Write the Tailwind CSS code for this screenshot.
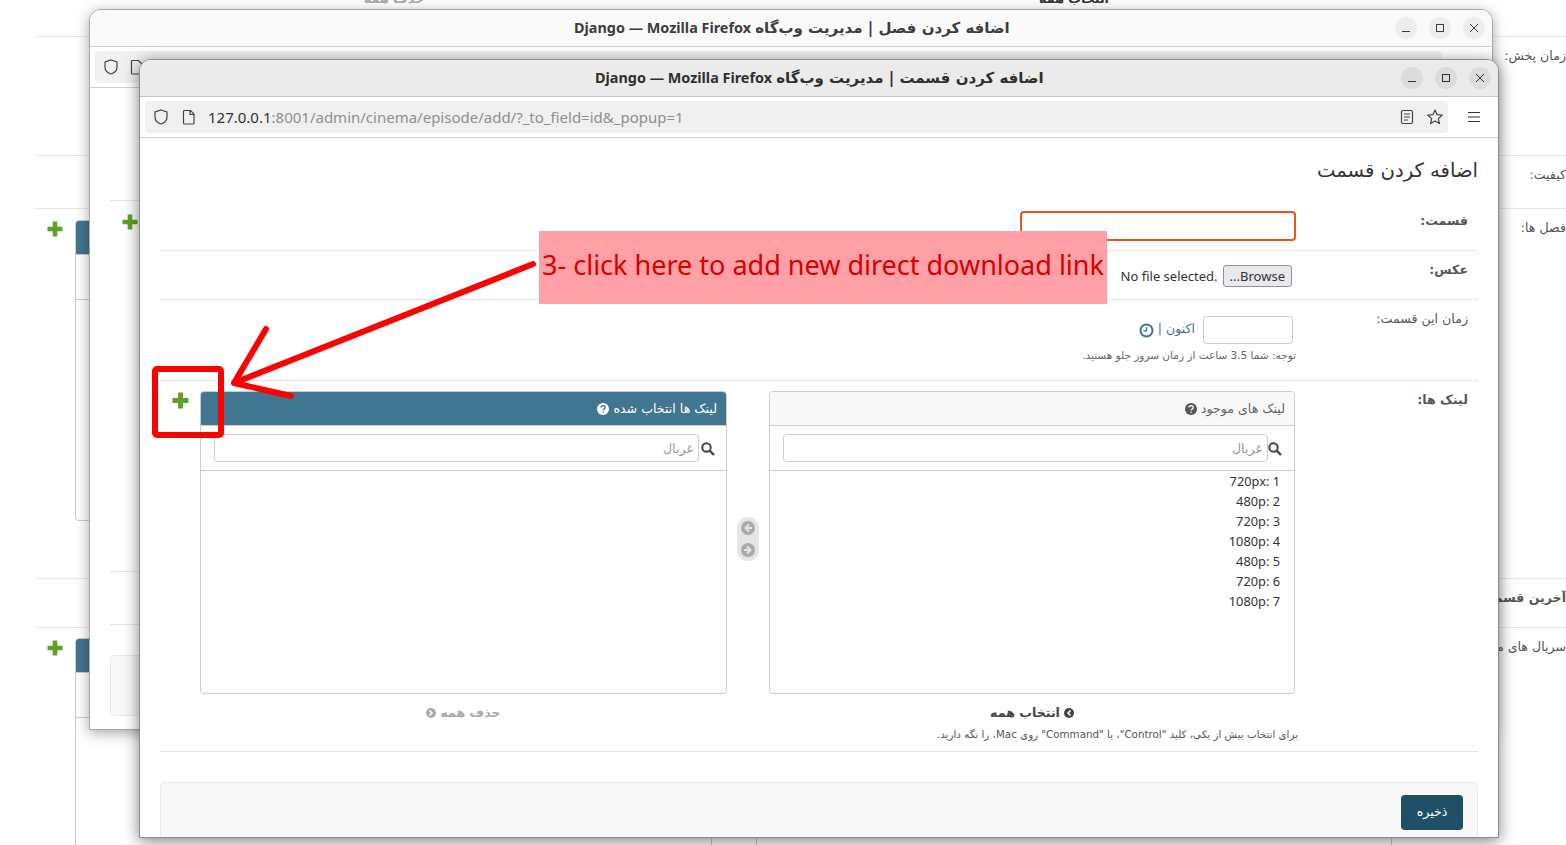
<!DOCTYPE html>
<html lang="fa">
<head>
<meta charset="utf-8">
<title>Django</title>
<script src="https://cdn.jsdelivr.net/npm/@tailwindcss/browser@4"></script>
</head>
<body class="bg-white overflow-hidden">
<div class="relative w-[1566px] h-[845px] overflow-hidden bg-white font-['Noto_Sans','DejaVu_Sans',sans-serif] text-[#333]">

  <!-- page behind the windows -->
  <div dir="rtl" class="w-[1566px] h-[845px] pl-[35px] text-[12.6px] text-[#555] font-['DejaVu_Sans',sans-serif]">
    <div class="h-[37px] border-b border-[#e6e6e6] flex pr-[174px] gap-[44px] overflow-hidden">
      <div class="w-[636px] text-center font-bold text-[#333] -mt-[10px]">انتخاب همه</div>
      <div class="w-[636px] text-center font-bold text-[#aaa] -mt-[10px]">حذف همه</div>
    </div>
    <div class="h-[119px] border-b border-[#e6e6e6] pt-[10px]">زمان پخش:</div>
    <div class="h-[53px] border-b border-[#e6e6e6] pt-[10px]">کیفیت:</div>
    <div class="h-[370px] border-b border-[#e6e6e6] flex">
      <div class="w-[174px] pt-[10px]">فصل ها:</div>
      <div class="w-[636px] h-[301px] mt-[11px] ml-[44px]"></div>
      <div class="w-[637px] h-[301px] mt-[11px] border border-[#ccc] rounded-[4px] overflow-hidden">
        <div class="h-[34px] bg-[#417690] border-b border-[#ccc]"></div>
        <div class="h-[45px] border-b border-[#ccc] pl-[13px] pt-[10px]"><div class="w-[400px] h-[28px] border border-[#ccc] rounded-[4px]"></div></div>
      </div>
      <svg class="w-[16px] h-[16px] mt-[12px] mr-[12px]" viewBox="0 0 16 16"><path d="M8 0.500v15M0.500 8h15" stroke="#5fa225" stroke-width="4.600"/></svg>
    </div>
    <div class="h-[49px] border-b border-[#e6e6e6] pt-[10px] font-bold">آخرین قسمت</div>
    <div class="flex">
      <div class="w-[174px] pt-[10px]">سریال های مرتبط:</div>
      <div class="w-[636px] h-[260px] mt-[10px] ml-[44px] border border-[#ccc] rounded-t-[4px]"></div>
      <div class="w-[637px] h-[260px] mt-[10px] border border-[#ccc] rounded-t-[4px] overflow-hidden">
        <div class="h-[34px] bg-[#417690] border-b border-[#ccc]"></div>
        <div class="h-[45px] border-b border-[#ccc] pl-[13px] pt-[10px]"><div class="w-[400px] h-[28px] border border-[#ccc] rounded-[4px]"></div></div>
      </div>
      <svg class="w-[16px] h-[16px] mt-[12px] mr-[12px]" viewBox="0 0 16 16"><path d="M8 0.500v15M0.500 8h15" stroke="#5fa225" stroke-width="4.600"/></svg>
    </div>
  </div>

  <!-- back window -->
  <div class="absolute left-[89px] top-[9px] w-[1404px] h-[721px] bg-white border border-[#a8a8a8] rounded-t-[12px] overflow-hidden shadow-[0_3px_14px_rgba(0,0,0,0.35)]">
    <div class="h-[37px] pb-[1px] bg-[#fafafa] border-b border-[#cfcfcf] flex items-center justify-between pl-[484px] pr-[7px]">
      <div dir="rtl" class="font-bold text-[#3d3d3d] whitespace-nowrap font-['Noto_Sans','DejaVu_Sans',sans-serif]"><span class="text-[15px] font-['DejaVu_Sans',sans-serif]">اضافه کردن فصل | مدیریت وب‌گاه</span> <span class="text-[14.4px]">Django — Mozilla Firefox</span></div>
      <div class="flex gap-[12px]">
        <span class="w-[22px] h-[22px] rounded-full bg-[#ededed] flex items-center justify-center"><svg class="w-[10px] h-[10px]" viewBox="0 0 10 10"><path d="M1 8.500h8" stroke="#3d3d3d" stroke-width="1"/></svg></span>
        <span class="w-[22px] h-[22px] rounded-full bg-[#ededed] flex items-center justify-center"><svg class="w-[10px] h-[10px]" viewBox="0 0 10 10"><rect x="1.500" y="1.500" width="7" height="7" fill="none" stroke="#3d3d3d"/></svg></span>
        <span class="w-[22px] h-[22px] rounded-full bg-[#ededed] flex items-center justify-center"><svg class="w-[10px] h-[10px]" viewBox="0 0 10 10"><path d="M1 1l8 8M9 1l-8 8" stroke="#3d3d3d"/></svg></span>
      </div>
    </div>
    <div class="h-[41px] border-b border-[#cfcfcf] pt-[4px] pl-[5px]">
      <div class="w-[1347px] h-[32px] bg-[#f0f0f0] rounded-[4px] flex items-center pl-[8px] gap-[11px]">
        <svg class="w-[16px] h-[16px]" viewBox="0 0 16 16"><path d="M8 1l6 2v5c0 3.500-3 6-6 7-3-1-6-3.500-6-7V3z" fill="none" stroke="#444" stroke-width="1.200"/></svg>
        <svg class="w-[14px] h-[16px]" viewBox="0 0 14 16"><path d="M2.500 1.500h6l3.500 3.500v9a1 1 0 0 1-1 1h-8.500a1 1 0 0 1-1-1v-11.500a1 1 0 0 1 1-1z" fill="none" stroke="#444" stroke-width="1.200"/></svg>
      </div>
    </div>
    <div class="px-[20px]">
      <div class="h-[113px] border-b border-[#e6e6e6]"></div>
      <svg class="w-[16px] h-[16px] mt-[13px] ml-[12px]" viewBox="0 0 16 16"><path d="M8 0.500v15M0.500 8h15" stroke="#5fa225" stroke-width="4.600"/></svg>
      <div class="h-[342px] border-b border-[#e6e6e6]"></div>
      <div class="h-[53px] border-b border-[#e6e6e6]"></div>
      <div class="h-[61px] mt-[30px] bg-[#f8f8f8] border border-[#e8e8e8] rounded-[5px]"></div>
    </div>
  </div>

  <!-- front window -->
  <div class="absolute left-[139px] top-[59px] w-[1360px] h-[779px] bg-white border border-[#8c8c8c] rounded-t-[12px] overflow-hidden shadow-[0_3px_16px_rgba(0,0,0,0.5)]">
    <div class="h-[37px] pb-[1px] bg-[#ebebeb] border-b border-[#c4c4c4] flex items-center justify-between pl-[455px] pr-[7px]">
      <div dir="rtl" class="font-bold text-[#2f2f2f] whitespace-nowrap font-['Noto_Sans','DejaVu_Sans',sans-serif]"><span class="text-[15px] font-['DejaVu_Sans',sans-serif]">اضافه کردن قسمت | مدیریت وب‌گاه</span> <span class="text-[14.4px]">Django — Mozilla Firefox</span></div>
      <div class="flex gap-[12px]">
        <span class="w-[22px] h-[22px] rounded-full bg-[#dcdcdc] flex items-center justify-center"><svg class="w-[10px] h-[10px]" viewBox="0 0 10 10"><path d="M1 8.500h8" stroke="#2f2f2f" stroke-width="1"/></svg></span>
        <span class="w-[22px] h-[22px] rounded-full bg-[#dcdcdc] flex items-center justify-center"><svg class="w-[10px] h-[10px]" viewBox="0 0 10 10"><rect x="1.500" y="1.500" width="7" height="7" fill="none" stroke="#2f2f2f"/></svg></span>
        <span class="w-[22px] h-[22px] rounded-full bg-[#dcdcdc] flex items-center justify-center"><svg class="w-[10px] h-[10px]" viewBox="0 0 10 10"><path d="M1 1l8 8M9 1l-8 8" stroke="#2f2f2f"/></svg></span>
      </div>
    </div>
    <div class="h-[41px] border-b border-[#cfcfcf] pt-[4px] pl-[5px] flex">
      <div class="w-[1303px] h-[32px] bg-[#f0f0f0] rounded-[4px] flex items-center pl-[8px] pr-[4px]">
        <svg class="w-[16px] h-[16px] shrink-0" viewBox="0 0 16 16"><path d="M8 1l6 2v5c0 3.500-3 6-6 7-3-1-6-3.500-6-7V3z" fill="none" stroke="#444" stroke-width="1.200"/></svg>
        <svg class="w-[14px] h-[16px] ml-[13px] shrink-0" viewBox="0 0 14 16"><path d="M2.500 1.500h6l3.500 3.500v9a1 1 0 0 1-1 1h-8.500a1 1 0 0 1-1-1v-11.500a1 1 0 0 1 1-1zM8 1.500v4h4" fill="none" stroke="#444" stroke-width="1.200"/></svg>
        <div class="ml-[12px] pt-[1px] text-[15px] whitespace-nowrap text-[#8f8f8f]"><span class="text-[#333]">127.0.0.1</span>:8001/admin/cinema/episode/add/?_to_field=id&amp;_popup=1</div>
        <svg class="w-[14px] h-[16px] ml-auto" viewBox="0 0 14 16"><rect x="1.500" y="1.500" width="11" height="13" rx="1.500" fill="none" stroke="#444" stroke-width="1.200"/><path d="M4 5h6M4 8h6M4 11h4" stroke="#444"/></svg>
        <svg class="w-[18px] h-[18px] ml-[12px]" viewBox="0 0 18 18"><path d="M9 2l2.100 4.700 5.100.5-3.900 3.400 1.200 5-4.500-2.700-4.500 2.700 1.200-5-3.900-3.400 5.100-.5z" fill="none" stroke="#444" stroke-width="1.200" stroke-linejoin="round"/></svg>
      </div>
      <svg class="w-[12px] h-[12px] ml-[20px] mt-[10px]" viewBox="0 0 12 12"><path d="M0 1.500h12M0 6h12M0 10.500h12" stroke="#333" stroke-width="1.200"/></svg>
    </div>

    <div dir="rtl" class="pr-[20px] pl-[20px] text-[12.6px] font-['DejaVu_Sans',sans-serif]">
      <h1 class="h-[62px] pt-[20px] text-[19.6px] leading-[26px] text-[#333]">اضافه کردن قسمت</h1>

      <div class="h-[51px] border-b border-[#e6e6e6] flex">
        <div class="w-[182px] pt-[12px] pr-[10px] font-bold text-[#555]">قسمت:</div>
        <div class="w-[276px] h-[30px] mt-[11px] border-2 border-[#e95420] rounded-[4px]"></div>
      </div>

      <div class="h-[49px] border-b border-[#e6e6e6] flex">
        <div class="w-[182px] pt-[10px] pr-[10px] font-bold text-[#555]">عکس:</div>
        <div class="flex items-center gap-[5px] mr-[4px] mt-[2px] h-[46px] text-[13px] font-['Noto_Sans',sans-serif]">
          <span class="h-[22px] px-[6px] pt-[1px] flex items-center bg-[#e9e9ed] border border-[#8f8f9d] rounded-[3px]">Browse...</span>
          <span dir="ltr" class="pt-[1px]">No file selected.</span>
        </div>
      </div>

      <div class="h-[81px] border-b border-[#e6e6e6] flex">
        <div class="w-[182px] pt-[10px] pr-[10px] text-[#555]">زمان این قسمت:</div>
        <div>
          <div class="flex items-center mt-[16px] mr-[3px]">
            <div class="w-[90px] h-[28px] border border-[#ccc] rounded-[4px]"></div>
            <span class="mr-[8px] pb-[2px] text-[#417690]">اکنون</span>
            <span class="mx-[4px] pb-[2px] text-[#417690]">|</span>
            <svg class="w-[15px] h-[15px]" viewBox="0 0 15 15"><circle cx="7.500" cy="7.500" r="6" fill="none" stroke="#417690" stroke-width="2"/><path d="M7.500 4v3.800H4.500" fill="none" stroke="#417690" stroke-width="1.400"/></svg>
          </div>
          <div class="mt-[3px] text-[10.5px] leading-[16px] text-[#666]">توجه: شما 3.5 ساعت از زمان سرور جلو هستید.</div>
        </div>
      </div>

      <div class="h-[371px] border-b border-[#e6e6e6] flex">
        <div class="w-[182px] pt-[10px] pr-[10px] font-bold text-[#555]">لینک ها:</div>
        <div class="mr-[1px] pt-[10px]">
          <div class="flex">
            <div class="w-[526px]">
              <div class="h-[303px] border border-[#ccc] rounded-[4px] overflow-hidden">
                <div class="h-[34px] bg-[#f8f8f8] border-b border-[#ccc] flex items-center gap-[4px] pr-[9px] pt-[1px] text-[#666]">
                  <span>لینک های موجود</span>
                  <svg class="w-[12px] h-[12px]" viewBox="0 0 12 12"><circle cx="6" cy="6" r="6" fill="#555"/><path d="M4 4.600c0-2.600 4.200-2.400 4.200 0 0 1.400-2.100 1.500-2.100 2.700M6.100 8.400v1.300" fill="none" stroke="#f8f8f8" stroke-width="1.400"/></svg>
                </div>
                <div class="h-[45px] border-b border-[#ccc] flex items-center pr-[12px] pb-[1px]">
                  <svg class="w-[14px] h-[14px] mt-[2px]" viewBox="0 0 14 14"><circle cx="5.500" cy="5.500" r="4.200" fill="none" stroke="#444" stroke-width="2"/><path d="M8.500 8.500l4.500 4.500" stroke="#444" stroke-width="2.400"/></svg>
                  <div class="w-[485px] h-[28px] border border-[#ccc] rounded-[4px] flex items-center pr-[5px] pt-[3px] text-[#999]">غربال</div>
                </div>
                <div class="pr-[14px] text-[12.8px] leading-[20px] text-[#333] font-['Noto_Sans',sans-serif]">
                  <div>1 :720px</div><div>2 :480p</div><div>3 :720p</div><div>4 :1080p</div><div>5 :480p</div><div>6 :720p</div><div>7 :1080p</div>
                </div>
              </div>
              <div class="mt-[11px] h-[16px] flex items-center justify-center gap-[4px] text-[12.6px] font-bold text-[#444]">
                <svg class="w-[10px] h-[10px]" viewBox="0 0 10 10"><circle cx="5" cy="5" r="5" fill="#444"/><path d="M6.500 2.500l-2.500 2.500 2.500 2.500" fill="none" stroke="#fff" stroke-width="1.500"/></svg>
                <span>انتخاب همه</span>
              </div>
            </div>

            <div class="w-[42px] pt-[126px] flex justify-center">
              <div class="w-[22px] h-[44px] bg-[#e5e5e5] rounded-[11px] flex flex-col items-center justify-center gap-[8px]">
                <svg class="w-[14px] h-[14px]" viewBox="0 0 14 14"><circle cx="7" cy="7" r="7" fill="#aaa"/><path d="M8 3.500l-3.500 3.500 3.500 3.500M5 7h6" fill="none" stroke="#e5e5e5" stroke-width="2"/></svg>
                <svg class="w-[14px] h-[14px]" viewBox="0 0 14 14"><circle cx="7" cy="7" r="7" fill="#aaa"/><path d="M6 3.500l3.500 3.500-3.500 3.500M9 7H3" fill="none" stroke="#e5e5e5" stroke-width="2"/></svg>
              </div>
            </div>

            <div class="w-[527px]">
              <div class="h-[303px] border border-[#ccc] rounded-[4px] overflow-hidden">
                <div class="h-[34px] bg-[#417690] border-b border-[#ccc] flex items-center gap-[4px] pr-[9px] pt-[1px] text-white">
                  <span>لینک ها انتخاب شده</span>
                  <svg class="w-[12px] h-[12px]" viewBox="0 0 12 12"><circle cx="6" cy="6" r="6" fill="#fff"/><path d="M4 4.600c0-2.600 4.200-2.400 4.200 0 0 1.400-2.100 1.500-2.100 2.700M6.100 8.400v1.300" fill="none" stroke="#417690" stroke-width="1.400"/></svg>
                </div>
                <div class="h-[45px] border-b border-[#ccc] flex items-center pr-[11px] pb-[1px]">
                  <svg class="w-[14px] h-[14px] mt-[2px]" viewBox="0 0 14 14"><circle cx="5.500" cy="5.500" r="4.200" fill="none" stroke="#444" stroke-width="2"/><path d="M8.500 8.500l4.500 4.500" stroke="#444" stroke-width="2.400"/></svg>
                  <div class="w-[485px] h-[28px] mr-[2px] border border-[#ccc] rounded-[4px] flex items-center pr-[5px] pt-[3px] text-[#999]">غربال</div>
                </div>
              </div>
              <div class="mt-[11px] h-[16px] flex items-center justify-center gap-[4px] text-[12.6px] font-bold text-[#aaa]">
                <span>حذف همه</span>
                <svg class="w-[10px] h-[10px]" viewBox="0 0 10 10"><circle cx="5" cy="5" r="5" fill="#aaa"/><path d="M3.500 2.500l2.500 2.500-2.500 2.500" fill="none" stroke="#fff" stroke-width="1.500"/></svg>
              </div>
            </div>

            <svg class="w-[17px] h-[17px] mt-[1px] mr-[11px] shrink-0" viewBox="0 0 17 17"><path d="M8.500 0.500v16M0.500 8.500h16" stroke="#5fa225" stroke-width="5"/></svg>
          </div>
          <div class="mt-[6px] -mr-[3px] text-[10.3px] leading-[14px] text-[#555] whitespace-nowrap">برای انتخاب بیش از یکی، کلید "Control"، یا "Command" روی Mac، را نگه دارید.</div>
        </div>
      </div>

      <div class="mt-[30px] h-[60px] bg-[#f8f8f8] border border-[#e8e8e8] rounded-t-[5px] pt-[12px] pr-[14px]">
        <div class="w-[62px] h-[35px] bg-[#205067] rounded-[4px] flex items-center justify-center text-white text-[12.6px]">ذخیره</div>
      </div>
    </div>
  </div>

  <!-- annotation on top of the screenshot -->
  <div class="absolute left-[539px] top-[231px] w-[568px] h-[73px] pb-[4px] bg-[#ff9fa6] flex items-center justify-center text-[27px] text-[#d50000] whitespace-nowrap font-['Noto_Sans',sans-serif]">3- click here to add new direct download link</div>
  <svg class="absolute left-0 top-0 w-[1566px] h-[845px] pointer-events-none" viewBox="0 0 1566 845">
    <path d="M533 264L234 383M266 329L234 383L291 396" fill="none" stroke="#ff0000" stroke-width="6" stroke-linecap="round" stroke-linejoin="round"/>
    <rect x="155" y="369" width="66" height="66" rx="2" fill="none" stroke="#ff0000" stroke-width="6"/>
  </svg>
</div>
</body>
</html>
